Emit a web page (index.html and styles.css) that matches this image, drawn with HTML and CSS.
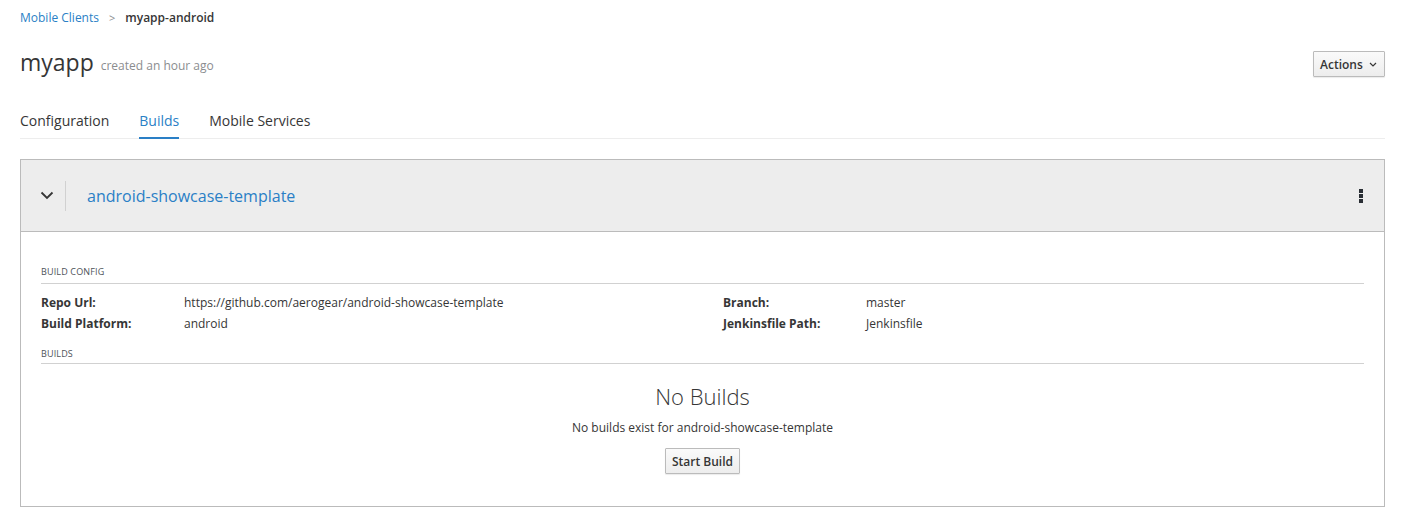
FILE: index.html
```html
<!DOCTYPE html>
<html>
<head>
<meta charset="utf-8">
<link rel="stylesheet" href="styles.css">
</head>
<body>
<div class="page">
  <ol class="breadcrumb">
    <li><a class="crumb-link">Mobile Clients</a></li>
    <li class="sep">&gt;</li>
    <li class="crumb-active">myapp-android</li>
  </ol>
  <div class="title-row">
    <h1 class="title">myapp <small class="meta">created an hour ago</small></h1>
    <button class="btn actions">Actions <svg class="caret" width="8" height="5" viewBox="0 0 8 5"><path d="M1 1l3 3 3-3" fill="none" stroke="#363636" stroke-width="1.2"/></svg></button>
  </div>
  <ul class="tabs">
    <li class="tab">Configuration</li>
    <li class="tab active">Builds</li>
    <li class="tab">Mobile Services</li>
  </ul>
  <div class="panel">
    <div class="panel-head">
      <div class="toggle"><svg width="14" height="9" viewBox="0 0 14 9"><path d="M1.5 1.5l5.5 5.5 5.5-5.5" fill="none" stroke="#363636" stroke-width="1.8"/></svg></div>
      <div class="panel-title">android-showcase-template</div>
      <div class="kebab"><span></span><span></span><span></span></div>
    </div>
    <div class="panel-body">
      <div class="section-label">Build Config</div>
      <div class="config">
        <div class="col">
          <div class="row"><span class="k">Repo Url:</span><span class="v">https://github.com/aerogear/android-showcase-template</span></div>
          <div class="row"><span class="k">Build Platform:</span><span class="v">android</span></div>
        </div>
        <div class="col">
          <div class="row"><span class="k">Branch:</span><span class="v">master</span></div>
          <div class="row"><span class="k">Jenkinsfile Path:</span><span class="v">Jenkinsfile</span></div>
        </div>
      </div>
      <div class="section-label builds-label">Builds</div>
      <div class="empty">
        <div class="empty-title">No Builds</div>
        <div class="empty-text">No builds exist for android-showcase-template</div>
        <button class="btn start">Start Build</button>
      </div>
    </div>
  </div>
</div>
</body>
</html>
```
FILE: styles.css
```css
* { box-sizing: border-box; }
body { margin: 0; font-family: "Open Sans", "Liberation Sans", sans-serif; color: #363636; font-size: 12px; background: #fff; }
.page { padding: 0 18px 0 20px; }
.breadcrumb { list-style: none; margin: 0; padding: 10px 0 0; display: flex; height: 28px; line-height: 16px; font-size: 12px; }
.crumb-link { color: #2a7fc6; }
.sep { color: #8b8d8f; padding: 0 10px; font-size: 11px; }
.crumb-active { font-weight: 600; color: #363636; }
.title-row { display: flex; justify-content: space-between; align-items: flex-start; padding-top: 17px; height: 66px; }
.title { margin: 0; font-size: 23px; font-weight: 400; line-height: 34px; color: #363636; }
.meta { font-size: 12px; color: #8b8d8f; font-weight: 400; margin-left: 1px; position: relative; top: -1px; }
.btn { font-family: inherit; font-size: 12px; font-weight: 600; color: #363636; background: linear-gradient(#fafafa, #ededed); border: 1px solid #bbb; border-radius: 1px; box-shadow: 0 1px 1px rgba(3,3,3,0.08); padding: 2px 6px; height: 26px; cursor: pointer; }
.actions { width: 72px; margin-top: 6px; display: flex; align-items: center; gap: 6px; }
.tabs { list-style: none; margin: 0; padding: 0; display: flex; gap: 30px; border-bottom: 1px solid #ededed; }
.tab { font-size: 14px; line-height: 20px; padding: 17px 0 6px; color: #363636; border-bottom: 2px solid transparent; margin-bottom: -1px; }
.tab.active { color: #2a7fc6; border-bottom-color: #2a7fc6; }
.panel { margin-top: 20px; border: 1px solid #bbb; }
.panel-head { background: #ededed; height: 72px; border-bottom: 1px solid #bbb; display: flex; align-items: center; padding: 0 21px 0 19px; }
.toggle { width: 26px; height: 30px; border-right: 1px solid #d1d1d1; display: flex; align-items: center; }
.panel-title { flex: 1; color: #2a7fc6; font-size: 16px; padding-left: 21px; }
.kebab { display: flex; flex-direction: column; gap: 1px; }
.kebab span { width: 4px; height: 4px; background: #292e34; display: block; }
.panel-body { padding: 34px 20px 32px 20px; }
.section-label { font-size: 9px; text-transform: uppercase; color: #4d5258; border-bottom: 1px solid #d1d1d1; padding-bottom: 5px; line-height: 12px; letter-spacing: 0.15px; }
.builds-label { padding-bottom: 3px; }
.config { display: flex; padding: 8px 0 14px; }
.col { flex: 1; }
.row { display: flex; line-height: 21px; }
.k { font-weight: 700; width: 143px; }
.col + .col { padding-left: 41px; }
.empty { display: flex; flex-direction: column; align-items: center; padding-top: 18px; }
.empty-title { font-size: 22px; font-weight: 300; line-height: 28px; }
.empty-text { margin-top: 10px; line-height: 16px; }
.start { margin-top: 12px; width: 75px; padding: 0; }
```
